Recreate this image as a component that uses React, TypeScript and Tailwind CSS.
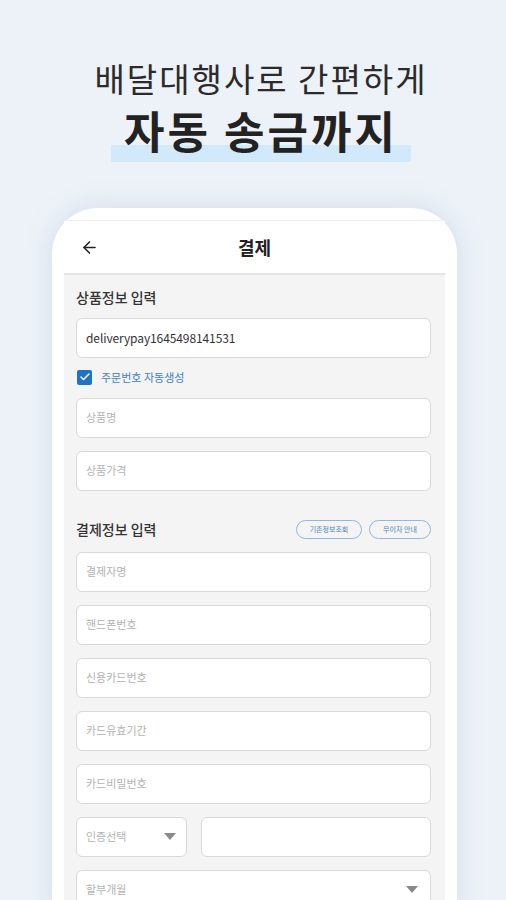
import { ArrowLeft, Check } from "lucide-react";

const FONT = "font-['Noto_Sans_CJK_KR','Noto_Sans',sans-serif]";

function Field({ placeholder, value }: { placeholder?: string; value?: string }) {
  return (
    <div className="h-10 rounded-md border-[1.5px] border-[#d9d9d9] bg-white flex items-center px-[9px]">
      {value ? (
        <span className="text-[12px] text-[#333] tracking-[-0.1px]">{value}</span>
      ) : (
        <span className="text-[11px] text-[#b3b3b3]">{placeholder}</span>
      )}
    </div>
  );
}

function Caret() {
  return (
    <svg width="12" height="7" viewBox="0 0 12 7">
      <path d="M0 0h12L6 7z" fill="#8a8a8a" />
    </svg>
  );
}

export default function App() {
  return (
    <div className={`${FONT} h-[900px] w-[506px] overflow-hidden bg-[#edf2f8] flex flex-col items-center`}>
      <div className="flex flex-col items-center pl-[16px]">
        <h1 className="mt-[57px] text-[33px] leading-[42px] text-[#2b2b2b] tracking-[2px]">배달대행사로 간편하게</h1>
        <div className="relative mt-[5px]">
          <div className="absolute left-[-13px] right-[-13px] top-[41px] h-[17px] bg-[#d2e8fb]" />
          <h2 className="relative text-[44px] leading-[52px] font-bold text-[#222] tracking-[3px]">자동 송금까지</h2>
        </div>
      </div>

      <div className="mt-[52px] ml-[3px] w-[405px] flex-1 rounded-t-[46px] bg-white px-3 pt-3 shadow-[0_0_24px_rgba(160,180,205,0.35)]">
        <div className="h-full flex flex-col border-t border-[#f0f0f0]">
          <div className="h-[54px] shrink-0 flex items-center relative border-b-2 border-[#e4e4e4] bg-white">
            <ArrowLeft className="absolute left-[16px] w-[19px] h-[19px] text-[#222]" strokeWidth={2} />
            <div className="flex-1 text-center text-[18px] font-bold text-[#222]">결제</div>
          </div>
          <div className="flex-1 bg-[#f4f4f4] pl-3 pr-[14px] pt-[11px]">
            <div className="text-[14px] leading-[22px] text-[#333] font-medium">상품정보 입력</div>
            <div className="mt-[10px]">
              <Field value="deliverypay1645498141531" />
            </div>
            <div className="mt-[11px] flex items-center gap-[9px] pl-[1px]">
              <div className="w-[15px] h-[15px] rounded-[2px] bg-[#1e73c8] flex items-center justify-center">
                <Check className="w-[12px] h-[12px] text-white" strokeWidth={3} />
              </div>
              <span className="text-[11px] text-[#3e82c6]">주문번호 자동생성</span>
            </div>
            <div className="mt-[12px] flex flex-col gap-[13px]">
              <Field placeholder="상품명" />
              <Field placeholder="상품가격" />
            </div>

            <div className="mt-[29px] flex items-center justify-between h-[20px]">
              <div className="text-[14px] text-[#333] font-medium">결제정보 입력</div>
              <div className="flex gap-[7px]">
                <span className="h-[19px] w-[66px] rounded-full border-[1.5px] border-[#8fb8e3] flex items-center justify-center text-[7px] text-[#4d83bd]">기존정보조회</span>
                <span className="h-[19px] w-[62px] rounded-full border-[1.5px] border-[#8fb8e3] flex items-center justify-center text-[7px] text-[#4d83bd]">무이자 안내</span>
              </div>
            </div>

            <div className="mt-[12px] flex flex-col gap-[13px]">
              <Field placeholder="결제자명" />
              <Field placeholder="핸드폰번호" />
              <Field placeholder="신용카드번호" />
              <Field placeholder="카드유효기간" />
              <Field placeholder="카드비밀번호" />
              <div className="flex gap-[14px]">
                <div className="w-[111px] h-10 rounded-md border-[1.5px] border-[#d9d9d9] bg-white flex items-center justify-between pl-[9px] pr-[10px]">
                  <span className="text-[11px] text-[#b3b3b3]">인증선택</span>
                  <Caret />
                </div>
                <div className="flex-1 h-10 rounded-md border-[1.5px] border-[#d9d9d9] bg-white" />
              </div>
              <div className="h-10 rounded-md border-[1.5px] border-[#d9d9d9] bg-white flex items-center justify-between pl-[9px] pr-[12px]">
                <span className="text-[11px] text-[#b3b3b3]">할부개월</span>
                <Caret />
              </div>
            </div>
          </div>
        </div>
      </div>
    </div>
  );
}
